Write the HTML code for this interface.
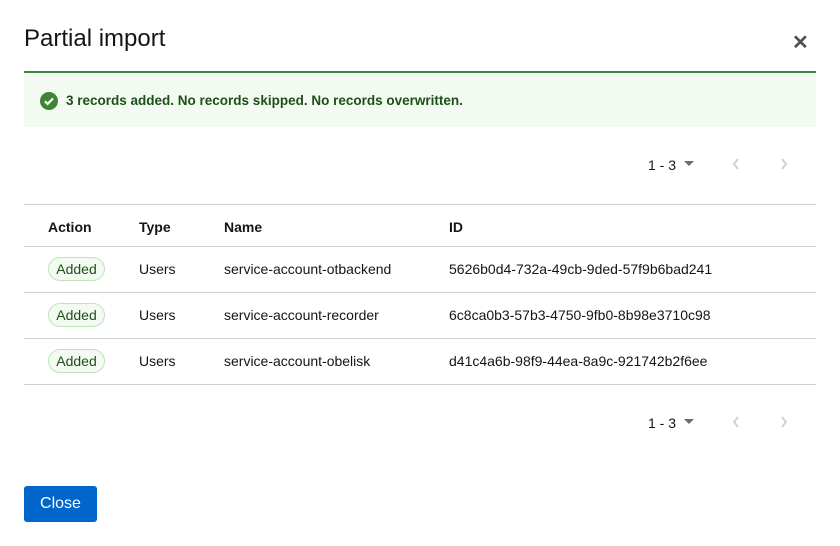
<!DOCTYPE html>
<html><head><style>
*{margin:0;padding:0;box-sizing:border-box}
body{width:840px;height:546px;background:#fff;font-family:"Liberation Sans",sans-serif;color:#151515;position:relative;overflow:hidden}
.abs{position:absolute}
h1{position:absolute;left:24px;top:23px;font-size:24px;font-weight:400;line-height:32px}
.x{position:absolute;left:792px;top:30px;font-size:20px;color:#4f5255;font-weight:700}
.alert{position:absolute;left:24px;top:71px;width:792px;height:56px;background:#f3faf2;border-top:2px solid #3e8635}
.alert span{position:absolute;left:42px;top:20px;font-size:13.5px;font-weight:700;color:#1e4f18}
.pg{position:absolute;font-size:14px}
.line{position:absolute;left:24px;width:792px;height:1px;background:#d2d2d2}
.th{position:absolute;top:219px;font-size:14px;font-weight:700}
.td{position:absolute;font-size:14px}
.badge{position:absolute;left:48px;width:57px;height:24px;border:1px solid #bde5b8;border-radius:12px;background:#f3faf2;color:#1e4f18;font-size:14px;text-align:center;line-height:22px}
.btn{position:absolute;left:24px;top:486px;width:73px;height:36px;background:#0066cc;color:#fff;border-radius:3px;font-size:16px;text-align:center;line-height:36px}
</style></head><body>
<h1>Partial import</h1>
<div class="x">✕</div>
<div class="alert"><svg class="abs" style="left:16px;top:19px" width="18" height="18" viewBox="0 0 18 18"><circle cx="9" cy="9" r="9" fill="#3e8635"/><path d="M5 9.3l2.6 2.6L13 6.5" stroke="#fff" stroke-width="2.2" fill="none"/></svg><span>3 records added. No records skipped. No records overwritten.</span></div>

<div class="pg" style="left:648px;top:157px">1 - 3</div>
<svg class="abs" style="left:684px;top:161px" width="10" height="6"><path d="M0 0h10L5 5z" fill="#6a6e73"/></svg>
<svg class="abs" style="left:732px;top:158px" width="8" height="12"><path d="M6 1L2 6l4 5" stroke="#d2d2d2" stroke-width="2" fill="none"/></svg>
<svg class="abs" style="left:780px;top:158px" width="8" height="12"><path d="M2 1l4 5-4 5" stroke="#d2d2d2" stroke-width="2" fill="none"/></svg>

<div class="line" style="top:204px"></div>
<div class="th" style="left:48px">Action</div>
<div class="th" style="left:139px">Type</div>
<div class="th" style="left:224px">Name</div>
<div class="th" style="left:449px">ID</div>
<div class="line" style="top:246px"></div>

<div class="badge" style="top:257px">Added</div>
<div class="td" style="left:139px;top:261px">Users</div>
<div class="td" style="left:224px;top:261px">service-account-otbackend</div>
<div class="td" style="left:449px;top:261px">5626b0d4-732a-49cb-9ded-57f9b6bad241</div>
<div class="line" style="top:292px"></div>

<div class="badge" style="top:303px">Added</div>
<div class="td" style="left:139px;top:307px">Users</div>
<div class="td" style="left:224px;top:307px">service-account-recorder</div>
<div class="td" style="left:449px;top:307px">6c8ca0b3-57b3-4750-9fb0-8b98e3710c98</div>
<div class="line" style="top:338px"></div>

<div class="badge" style="top:349px">Added</div>
<div class="td" style="left:139px;top:353px">Users</div>
<div class="td" style="left:224px;top:353px">service-account-obelisk</div>
<div class="td" style="left:449px;top:353px">d41c4a6b-98f9-44ea-8a9c-921742b2f6ee</div>
<div class="line" style="top:384px"></div>

<div class="pg" style="left:648px;top:415px">1 - 3</div>
<svg class="abs" style="left:684px;top:419px" width="10" height="6"><path d="M0 0h10L5 5z" fill="#6a6e73"/></svg>
<svg class="abs" style="left:732px;top:416px" width="8" height="12"><path d="M6 1L2 6l4 5" stroke="#d2d2d2" stroke-width="2" fill="none"/></svg>
<svg class="abs" style="left:780px;top:416px" width="8" height="12"><path d="M2 1l4 5-4 5" stroke="#d2d2d2" stroke-width="2" fill="none"/></svg>

<div class="btn">Close</div>
</body></html>
